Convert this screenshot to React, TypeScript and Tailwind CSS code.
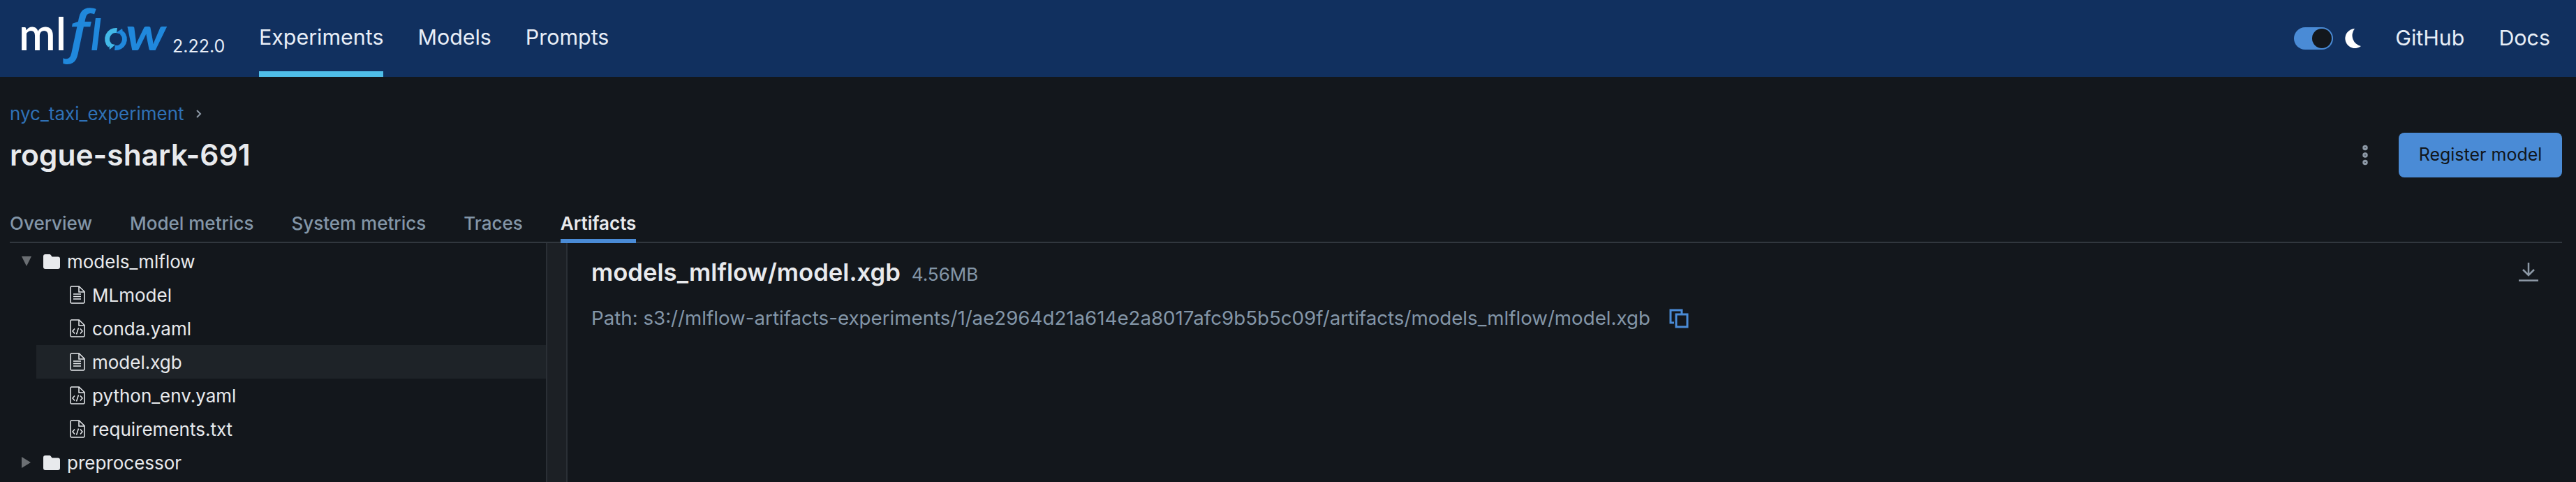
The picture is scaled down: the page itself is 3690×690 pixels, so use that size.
import { MoreVertical } from 'lucide-react';

const tabs = ['Overview', 'Model metrics', 'System metrics', 'Traces', 'Artifacts'];

function MlflowLogo() {
  return (
    <svg width="212" height="100" viewBox="0 0 212 100" className="shrink-0 overflow-visible">
      <text x="-3" y="72" fill="#ffffff" fontFamily="Lato" fontWeight="600" fontSize="65" textLength="68" lengthAdjust="spacingAndGlyphs">ml</text>
      <text x="61" y="72" fill="#2088dc" fontFamily="Open Sans" fontStyle="italic" fontWeight="600" fontSize="84">ƒ</text>
      <text x="100" y="72" fill="#2088dc" fontFamily="Lato" fontStyle="italic" fontWeight="700" fontSize="62">l</text>
      <g fill="none" strokeWidth="7">
        <path d="M127.500 65a12.500 12.500 0 0 1 10-21.500" stroke="#43b9e8" />
        <path d="M144.500 47a12.500 12.500 0 0 1-10 21.500" stroke="#2088dc" />
      </g>
      <path d="M136 47l9-6 2 9z" fill="#2088dc" />
      <path d="M126 62l9 2-8 7z" fill="#43b9e8" />
      <text x="150" y="72" fill="#2088dc" fontFamily="Lato" fontStyle="italic" fontWeight="700" fontSize="66" textLength="58" lengthAdjust="spacingAndGlyphs">w</text>
    </svg>
  );
}

function FolderIcon() {
  return (
    <svg width="24" height="21" viewBox="0 0 24 21" className="shrink-0">
      <path d="M3 0h5.500c1.500 0 2 .6 2.800 1.700L12.500 3.500H21a3 3 0 0 1 3 3V18a3 3 0 0 1-3 3H3a3 3 0 0 1-3-3V3a3 3 0 0 1 3-3z" fill="#e8eaed" />
    </svg>
  );
}

function FileIcon({ code }: { code?: boolean }) {
  return (
    <svg width="22" height="26" viewBox="0 0 22 26" fill="none" stroke="#e8eaed" strokeWidth="1.500" className="shrink-0">
      <path d="M1.750 1h11.500L21 8.500V23.500a1.500 1.500 0 0 1-1.500 1.500H2.500A1.500 1.500 0 0 1 1 23.500V2.500A1.500 1.500 0 0 1 2.500 1z" />
      <path d="M13 1v8h8" />
      {code ? (
        <path d="M7 13.500L4 17l3 3.500M15 13.500l3 3.500-3 3.500M12.500 12.500l-3 9" />
      ) : (
        <path d="M5 12h11M5 15.500h11M5 19h11" />
      )}
    </svg>
  );
}

function FileRow({ name, code, selected }: { name: string; code?: boolean; selected?: boolean }) {
  return (
    <div className={`h-12 ml-[38px] pl-[48px] flex items-center gap-[10px] ${selected ? 'bg-[#1e2328]' : ''}`}>
      <FileIcon code={code} />
      <span>{name}</span>
    </div>
  );
}

export default function App() {
  return (
    <div className="w-[3690px] h-[690px] overflow-hidden bg-[#13171c] text-[#e8eaed] font-['Inter',sans-serif] flex flex-col">
      <header className="h-[110px] shrink-0 bg-[#11305f] flex pl-[30px] pr-[37px] text-[30.400px] text-[#e8eef7]">
        <div className="w-[217px] shrink-0 flex items-start">
          <MlflowLogo />
        </div>
        <div className="w-[124px] shrink-0 text-[25px] pt-[48px] leading-[36px]">2.22.0</div>
        <nav className="flex gap-[49px] h-full">
          <a className="h-full flex items-center border-b-8 border-[#4fbee8] pt-[6px]">Experiments</a>
          <a className="h-full flex items-center border-b-8 border-transparent pt-[6px]">Models</a>
          <a className="h-full flex items-center border-b-8 border-transparent pt-[6px]">Prompts</a>
        </nav>
        <div className="ml-auto flex items-center gap-[49px]">
          <div className="flex items-center gap-[16px]">
            <div className="w-[56px] h-[32px] rounded-full bg-[#4a8bd6] flex items-center justify-end pr-[2px]">
              <div className="w-[28px] h-[28px] rounded-full bg-[#13171c]" />
            </div>
            <svg width="24" height="28" viewBox="0 0 24 28">
              <path d="M15 0a14 14 0 1 0 9 25A15.500 15.500 0 0 1 15 0z" fill="#ffffff" />
            </svg>
          </div>
          <a>GitHub</a>
          <a>Docs</a>
        </div>
      </header>

      <div className="flex-1 min-h-0 flex flex-col px-[14px] pr-[20px]">
        <div className="h-[238px] shrink-0 flex flex-col">
          <div className="pt-[40px] flex items-center gap-[16px] text-[26px] leading-[26px] text-[#2f71b7]">
            <span>nyc_taxi_experiment</span>
            <svg width="10" height="14" viewBox="0 0 10 14" fill="none" stroke="#8d99a6" strokeWidth="2"><path d="M2 2l5 5-5 5" /></svg>
          </div>
          <div className="flex items-center justify-between mt-[14px]">
            <h1 className="text-[42.500px] leading-[64px] font-semibold">rogue-shark-691</h1>
            <div className="flex items-center gap-[30px]">
              <MoreVertical size={36} strokeWidth={3} className="text-[#8d99a6]" />
              <button className="w-[234px] h-[64px] rounded-lg bg-[#4a8bd6] text-[#11161b] text-[25px]">Register model</button>
            </div>
          </div>
          <div className="mt-auto flex gap-[54px] border-b-2 border-[#31373e] h-[48px] text-[26px] font-medium text-[#8396a8]">
            {tabs.map((tab) => (
              <div key={tab} className={`h-[48px] ${tab === 'Artifacts' ? 'text-[#e8eaed] font-semibold border-b-[6px] border-[#4a8bd6]' : ''}`}>
                {tab}
              </div>
            ))}
          </div>
        </div>

        <div className="flex-1 min-h-0 flex">
          <div className="w-[768px] shrink-0 text-[26px] pt-[2px]">
            <div className="h-12 flex items-center pl-[16px] gap-[10px]">
              <svg width="16" height="14" viewBox="0 0 16 14" className="shrink-0 mr-[6px]"><path d="M1 0h14l-7 14z" fill="#6b6f73" /></svg>
              <FolderIcon />
              <span>models_mlflow</span>
            </div>
            <FileRow name="MLmodel" />
            <FileRow name="conda.yaml" code />
            <FileRow name="model.xgb" selected />
            <FileRow name="python_env.yaml" code />
            <FileRow name="requirements.txt" code />
            <div className="h-12 flex items-center pl-[16px] gap-[10px]">
              <svg width="16" height="16" viewBox="0 0 16 16" className="shrink-0 mr-[6px]"><path d="M1 0l13 8-13 8z" fill="#6b6f73" /></svg>
              <FolderIcon />
              <span>preprocessor</span>
            </div>
          </div>
          <div className="w-[31px] shrink-0 bg-[#1c2025] border-x-2 border-[#2a2f35]" />
          <div className="flex-1 pl-[34px] pt-[21px] flex flex-col">
            <div className="flex items-center justify-between">
              <div className="flex items-baseline gap-[16px]">
                <span className="text-[34.700px] leading-[40px] font-semibold">models_mlflow/model.xgb</span>
                <span className="text-[26px] text-[#8396a8]">4.56MB</span>
              </div>
              <svg width="28" height="28" viewBox="0 0 28 28" fill="none" stroke="#8d99a6" strokeWidth="2.500" className="mr-[34px] -translate-y-[2px]">
                <path d="M14 1v17M6 11l8 8 8-8" />
                <path d="M0 26.500h28" />
              </svg>
            </div>
            <div className="mt-[23px] flex items-center gap-[27px] text-[27.700px] text-[#8396a8]">
              <span>Path: s3://mlflow-artifacts-experiments/1/ae2964d21a614e2a8017afc9b5b5c09f/artifacts/models_mlflow/model.xgb</span>
              <svg width="28" height="28" viewBox="0 0 28 28" fill="none" stroke="#4a8bd6" strokeWidth="3">
                <path d="M7 20H2V2h16v5" />
                <path d="M10 8h16v18H10z" />
              </svg>
            </div>
          </div>
        </div>
      </div>
    </div>
  );
}
